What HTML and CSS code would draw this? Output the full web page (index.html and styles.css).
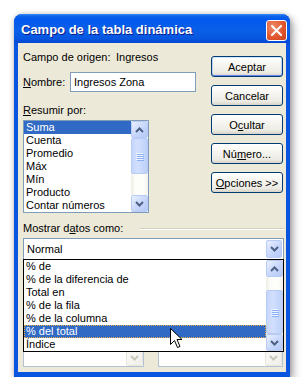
FILE: index.html
```html
<!DOCTYPE html>
<html lang="es">
<head>
    <meta charset="UTF-8">
    <title>Campo de la tabla dinámica</title>
    <link rel="stylesheet" href="styles.css">
</head>
<body>
    <div class="stage">
        <div class="window">
            <div class="titlebar">
                <span class="title">Campo de la tabla dinámica</span>
                <span class="close">
                    <svg width="11" height="11" viewBox="0 0 11 11"><path d="M1 1 L10 10 M10 1 L1 10" stroke="#fff" stroke-width="2" stroke-linecap="square"/></svg>
                </span>
            </div>
            <div class="client">
                <div class="top">
                    <div class="fields">
                        <div class="origin">
                            <span class="origin-label">Campo de origen:</span>
                            <span>Ingresos</span>
                        </div>
                        <div class="name-row">
                            <span class="name-label"><u>N</u>ombre:</span>
                            <div class="textbox">Ingresos Zona</div>
                        </div>
                        <div class="label summarize"><u>R</u>esumir por:</div>
                        <div class="listbox summary-list">
                            <ul class="items">
                                <li class="selected">Suma</li>
                                <li>Cuenta</li>
                                <li>Promedio</li>
                                <li>Máx</li>
                                <li>Mín</li>
                                <li>Producto</li>
                                <li>Contar números</li>
                            </ul>
                            <div class="scrollbar">
                                <span class="sb-btn"><svg width="9" height="6" viewBox="0 0 9 6"><path d="M1 5 L4.5 1.5 L8 5" fill="none" stroke="#4d6185" stroke-width="2"/></svg></span>
                                <div class="track">
                                    <span class="thumb" style="top: 0; height: 36px;"><i></i><i></i><i></i><i></i></span>
                                </div>
                                <span class="sb-btn"><svg width="9" height="6" viewBox="0 0 9 6"><path d="M1 1 L4.5 4.5 L8 1" fill="none" stroke="#4d6185" stroke-width="2"/></svg></span>
                            </div>
                        </div>
                    </div>
                    <div class="buttons">
                        <button class="default">Aceptar</button>
                        <button>Cancelar</button>
                        <button>O<u>c</u>ultar</button>
                        <button>Nú<u>m</u>ero...</button>
                        <button><u>O</u>pciones &gt;&gt;</button>
                    </div>
                </div>

                <div class="group-label">
                    <span>Mostrar d<u>a</u>tos como:</span>
                    <span class="rule"></span>
                </div>
                <div class="combo">
                    <span class="combo-text">Normal</span>
                    <span class="sb-btn drop-btn"><svg width="9" height="6" viewBox="0 0 9 6"><path d="M1 1 L4.5 4.5 L8 1" fill="none" stroke="#4d6185" stroke-width="2"/></svg></span>

                    <div class="popup">
                        <ul class="items">
                            <li>% de</li>
                            <li>% de la diferencia de</li>
                            <li>Total en</li>
                            <li>% de la fila</li>
                            <li>% de la columna</li>
                            <li class="selected focused">% del total</li>
                            <li>Índice</li>
                        </ul>
                        <div class="scrollbar">
                            <span class="sb-btn"><svg width="9" height="6" viewBox="0 0 9 6"><path d="M1 5 L4.5 1.5 L8 5" fill="none" stroke="#4d6185" stroke-width="2"/></svg></span>
                            <div class="track">
                                <span class="thumb" style="top: 13px; height: 44px;"><i></i><i></i><i></i><i></i></span>
                            </div>
                            <span class="sb-btn"><svg width="9" height="6" viewBox="0 0 9 6"><path d="M1 1 L4.5 4.5 L8 1" fill="none" stroke="#4d6185" stroke-width="2"/></svg></span>
                        </div>
                    </div>
                </div>

                <!-- base field lists, mostly hidden behind the open popup -->
                <div class="base-row">
                    <div class="base-col left">
                        <div class="listbox disabled">
                            <ul class="items"></ul>
                            <div class="scrollbar">
                                <span class="sb-btn off"><svg width="9" height="6" viewBox="0 0 9 6"><path d="M1 5 L4.5 1.5 L8 5" fill="none" stroke="#c9c7ba" stroke-width="2"/></svg></span>
                                <div class="track"></div>
                                <span class="sb-btn off"><svg width="9" height="6" viewBox="0 0 9 6"><path d="M1 1 L4.5 4.5 L8 1" fill="none" stroke="#c9c7ba" stroke-width="2"/></svg></span>
                            </div>
                        </div>
                    </div>
                    <div class="base-col right">
                        <div class="listbox disabled">
                            <ul class="items"></ul>
                            <div class="scrollbar">
                                <span class="sb-btn off"><svg width="9" height="6" viewBox="0 0 9 6"><path d="M1 5 L4.5 1.5 L8 5" fill="none" stroke="#c9c7ba" stroke-width="2"/></svg></span>
                                <div class="track"></div>
                                <span class="sb-btn off"><svg width="9" height="6" viewBox="0 0 9 6"><path d="M1 1 L4.5 4.5 L8 1" fill="none" stroke="#c9c7ba" stroke-width="2"/></svg></span>
                            </div>
                        </div>
                    </div>
                </div>
            </div>

            <!-- mouse pointer over the popup -->
            <svg class="cursor" width="13" height="22" viewBox="0 0 13 22">
                <path d="M0.5 0.5 L0.5 16.5 L4.5 12.5 L7.5 19.5 L10 18.5 L7 11.5 L12 11.5 Z" fill="#fff" stroke="#000" stroke-width="1" stroke-linejoin="miter"/>
            </svg>
        </div>
    </div>
</body>
</html>
```

FILE: styles.css
```css
body {
    margin: 0;
    background-color: #fff;
    font-family: "Liberation Sans", Arial, sans-serif;
    font-size: 11px;
    color: #000;
}

.stage {
    padding: 14px 0 0 14px;
}

.window {
    position: relative;
    width: 276px;
    height: 363px;
    display: flex;
    flex-direction: column;
    background-color: #0a55e0;
    border-radius: 8px 8px 0 0;
    box-shadow: 3px 4px 9px rgba(0, 0, 0, 0.35), 0 0 5px rgba(0, 0, 0, 0.18);
}

.titlebar {
    height: 29px;
    display: flex;
    align-items: center;
    justify-content: space-between;
    padding: 0 3px 0 7px;
    border-radius: 8px 8px 0 0;
    background: linear-gradient(to bottom, #3a8cf4 0, #0f63ea 2px, #0058ee 5px, #0a5fe8 55%, #0756e0 85%, #0047d2 100%);
}

.title {
    color: #fff;
    font-weight: bold;
    font-size: 13px;
    text-shadow: 1px 1px 0 #0c1a8a;
    margin-top: 2px;
}

.close {
    width: 19px;
    height: 19px;
    margin-top: 3px;
    display: flex;
    align-items: center;
    justify-content: center;
    border: 1px solid #fff;
    border-radius: 3px;
    background: radial-gradient(circle at 30% 30%, #f08a6a 0, #e2582f 55%, #c8401c 100%);
}

.client {
    flex: 1;
    margin: 0 4px 5px 4px;
    padding: 8px 2px 0 5px;
    background-color: #ece9d8;
}

.top {
    display: flex;
}

.fields {
    width: 173px;
}

.origin {
    display: flex;
    height: 13px;
    line-height: 13px;
}

.origin-label {
    width: 93px;
}

.name-row {
    display: flex;
    align-items: center;
    margin-top: 8px;
    height: 20px;
}

.name-label {
    width: 47px;
}

.textbox {
    width: 118px;
    height: 18px;
    line-height: 18px;
    padding: 0 3px;
    border: 1px solid #7f9db9;
    background-color: #fff;
}

.label {
    height: 13px;
    line-height: 13px;
}

.summarize {
    margin-top: 12px;
}

.listbox {
    display: flex;
    margin-top: 3px;
    border: 1px solid #7f9db9;
    background-color: #fff;
}

.summary-list {
    width: 124px;
    height: 91px;
}

.items {
    flex: 1;
    list-style: none;
    margin: 0;
    padding: 0;
    overflow: hidden;
}

.items li {
    height: 13px;
    line-height: 13px;
    padding-left: 2px;
    white-space: nowrap;
}

.items li.selected {
    background-color: #316ac5;
    color: #fff;
}

.items li.focused {
    outline: 1px dotted #e9b04a;
    outline-offset: -1px;
}

.scrollbar {
    width: 17px;
    display: flex;
    flex-direction: column;
}

.sb-btn {
    box-sizing: border-box;
    width: 17px;
    height: 17px;
    display: flex;
    align-items: center;
    justify-content: center;
    border: 1px solid #b8cbf4;
    border-radius: 2px;
    background: linear-gradient(135deg, #e9f0fe 0, #c9d8fc 50%, #b4c8f6 100%);
}

.sb-btn.off {
    border-color: #e8e6dc;
    background: linear-gradient(135deg, #fbfbf9 0, #efeee8 100%);
}

.track {
    position: relative;
    flex: 1;
    background: linear-gradient(to right, #eeede5 0, #fdfdfa 25%, #fdfdfa 75%, #f3f1ec 100%);
}

.thumb {
    position: absolute;
    left: 0;
    box-sizing: border-box;
    width: 17px;
    display: flex;
    flex-direction: column;
    align-items: center;
    justify-content: center;
    gap: 1px;
    border: 1px solid #b8cbf4;
    border-radius: 2px;
    background: linear-gradient(to right, #c6d6fc 0, #d2dffd 40%, #bcd0fa 100%);
}

.thumb i {
    display: block;
    width: 7px;
    height: 1px;
    background-color: #eef4fe;
    box-shadow: 1px 1px 0 #8cb0f8;
}

.buttons {
    margin: 5px 0 0 15px;
    display: flex;
    flex-direction: column;
    gap: 8px;
}

button {
    width: 72px;
    height: 21px;
    padding: 0;
    font-family: inherit;
    font-size: 11px;
    color: #000;
    border: 1px solid #003c74;
    border-radius: 3px;
    background: linear-gradient(to bottom, #ffffff 0, #f6f5f0 40%, #ecebe4 80%, #d8d3c8 100%);
}

button.default {
    box-shadow: inset 0 1px 0 #cee7ff, inset 0 -1px 0 #6982ee, inset 1px 0 0 #b9d1fa, inset -1px 0 0 #b9d1fa;
}

.group-label {
    display: flex;
    align-items: center;
    margin-top: 9px;
    height: 13px;
    line-height: 13px;
}

.rule {
    flex: 1;
    margin-left: 16px;
    height: 1px;
    background-color: #d0d0bf;
    border-bottom: 1px solid #fff;
}

.combo {
    position: relative;
    box-sizing: border-box;
    width: 261px;
    height: 22px;
    margin-top: 3px;
    padding: 1px;
    display: flex;
    align-items: center;
    border: 1px solid #7f9db9;
    background-color: #fff;
}

.combo-text {
    flex: 1;
    padding-left: 2px;
}

.drop-btn {
    width: 16px;
    height: 18px;
}

.popup {
    position: absolute;
    left: -1px;
    top: 20px;
    box-sizing: border-box;
    width: 261px;
    height: 93px;
    display: flex;
    border: 1px solid #000;
    background-color: #fff;
    z-index: 2;
}

.base-row {
    display: flex;
    gap: 14px;
    margin-top: 22px;
}

.base-col.left .listbox {
    width: 119px;
    height: 80px;
}

.base-col.right .listbox {
    width: 123px;
    height: 80px;
}

.listbox.disabled {
    border-color: #b5c1d4;
}

.cursor {
    position: absolute;
    left: 156px;
    top: 314px;
    z-index: 5;
}
```
